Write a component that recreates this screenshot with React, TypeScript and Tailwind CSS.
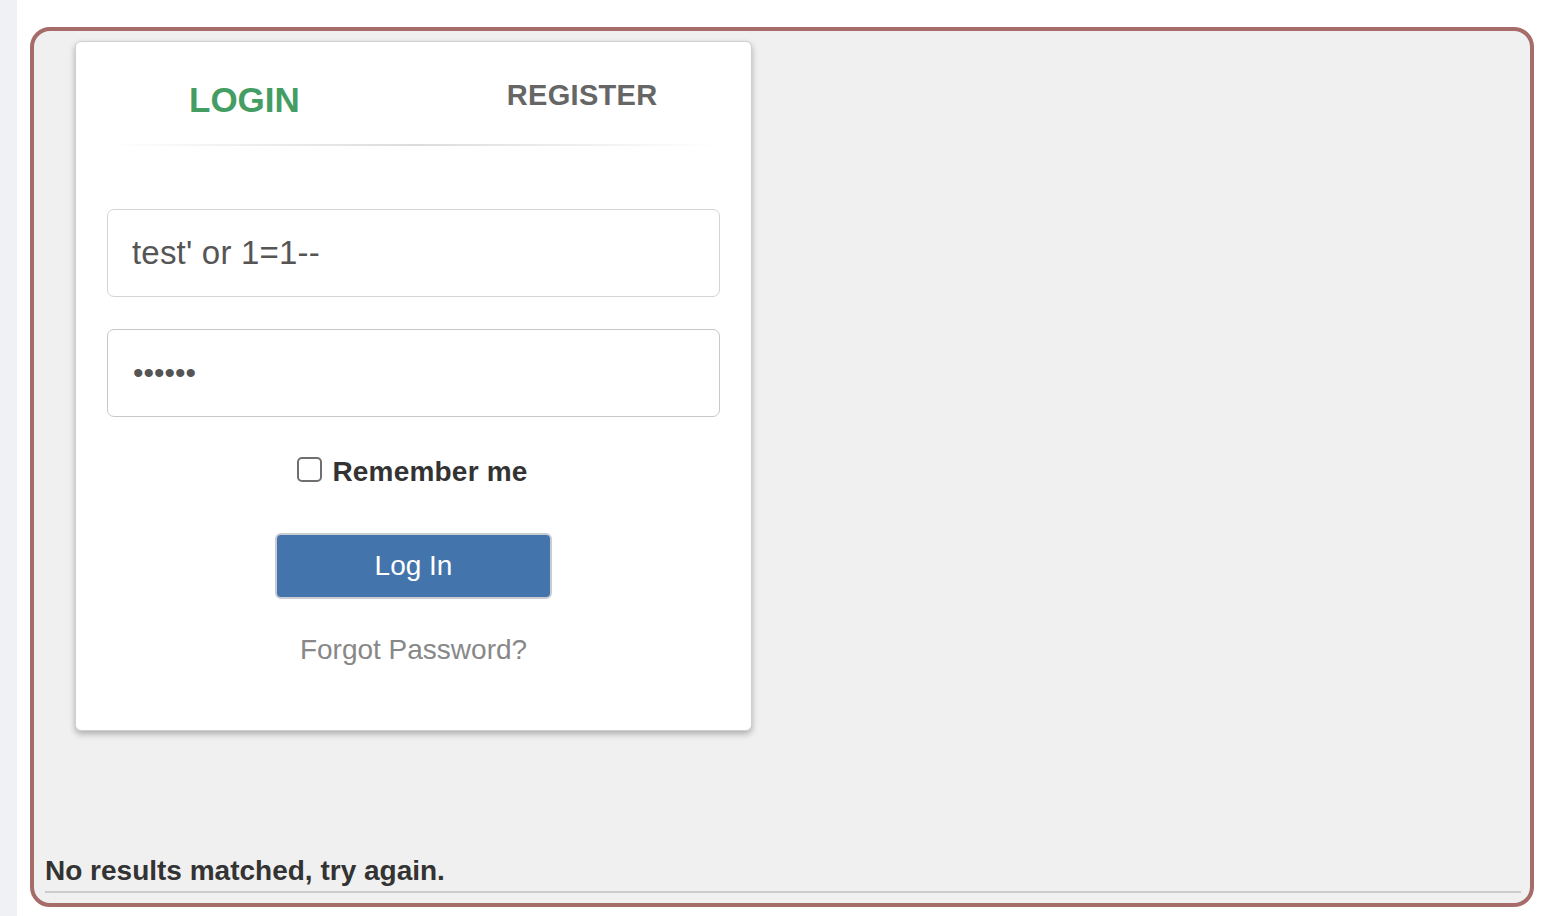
import React from "react";

export default function App() {
  const font = { fontFamily: '"Liberation Sans", Arial, Helvetica, sans-serif' };
  return (
    <div className="flex w-[1546px] h-[916px] bg-white overflow-hidden" style={font}>
      <div className="w-[17px] h-full bg-[#f0f1f5] shrink-0" />
      <div className="flex-1 pl-[13px] pr-[12px] pt-[27px]">
        <div className="flex flex-col h-[880px] rounded-[20px] border-4 border-[#a66c6a] bg-[#f0f0f0]">
          <div className="ml-[41px] mt-[10px] w-[677px] bg-white border border-[#cfcfcf] rounded-[6px] shadow-[0_3px_6px_rgba(0,0,0,0.28)] px-[31px] pb-[65px]">
            <div className="flex items-start">
              <div className="ml-[82px] mt-[40px] text-[35px] leading-none font-bold text-[#449d62]">LOGIN</div>
              <div className="ml-[207px] mt-[39px] text-[29px] leading-none font-bold text-[#666666] tracking-[0.3px]">REGISTER</div>
            </div>
            <div className="mt-[27px] mx-[3px] h-[2px] bg-gradient-to-r from-transparent via-[#dcdcdc] to-transparent" />
            <input
              readOnly
              defaultValue="test' or 1=1--"
              className="mt-[63px] block w-full h-[88px] rounded-[7px] border border-[#d4d4d4] bg-white px-[24px] text-[33px] text-[#555555] tracking-[0.2px] outline-none"
            />
            <input
              readOnly
              type="password"
              defaultValue="123456"
              className="mt-[32px] block w-full h-[88px] rounded-[7px] border border-[#c8c8c8] bg-white px-[25px] text-[30px] text-[#555555] outline-none"
            />
            <div className="mt-[40px] flex justify-center items-start h-[30px] pr-[2px]">
              <span className="w-[25px] h-[25px] rounded-[5px] border-2 border-[#6f6f6f] bg-white" />
              <span className="ml-[10px] text-[28px] leading-[30px] font-bold text-[#333333] tracking-[0.2px]">Remember me</span>
            </div>
            <div className="mt-[46px] flex justify-center">
              <button className="w-[277px] h-[66px] rounded-[6px] border-2 border-[#c9ccd2] bg-[#4374ac] text-white text-[28px] leading-none">
                Log In
              </button>
            </div>
            <div className="mt-[36px] text-center text-[28px] leading-[30px] text-[#888888]">Forgot Password?</div>
          </div>
          <div className="flex-1" />
          <div className="pl-[11px] pr-[9px] pb-[10px]">
            <div className="text-[28px] leading-[30px] font-bold text-[#333333]">No results matched, try again.</div>
            <div className="mt-[5px] h-[2px] bg-[#cccccc]" />
          </div>
        </div>
      </div>
    </div>
  );
}
